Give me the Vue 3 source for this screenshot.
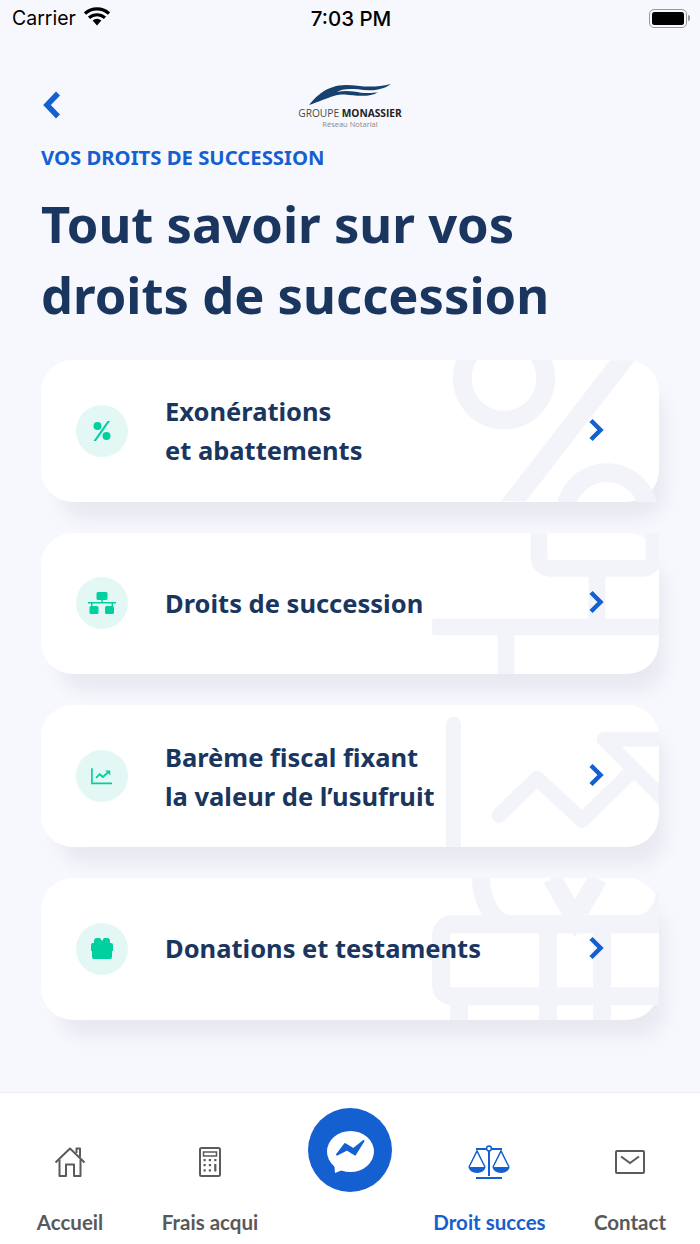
<script setup>
const cards = [
  { id: 'pct', lines: ['Exonérations', 'et abattements'] },
  { id: 'org', lines: ['Droits de succession'] },
  { id: 'chart', lines: ['Barème fiscal fixant', 'la valeur de l’usufruit'] },
  { id: 'gift', lines: ['Donations et testaments'] },
]
</script>

<template>
  <div class="page">
    <div class="status">
      <div class="status-left">
        <span>Carrier</span>
        <svg class="wifi" width="26" height="19" viewBox="0 0 26 19">
          <path d="M13 18.5 8.6 13.4a6.6 6.6 0 0 1 8.8 0Z" fill="#000" />
          <path d="M1 6.6a17.6 17.6 0 0 1 24 0M5 10.8a12 12 0 0 1 16 0" fill="none" stroke="#000" stroke-width="3.2" />
        </svg>
      </div>
      <span class="time">7:03 PM</span>
      <div class="battery">
        <div class="battery-body"><div class="battery-fill"></div></div>
        <div class="battery-tip"></div>
      </div>
    </div>

    <div class="topbar">
      <svg class="back" width="20" height="30" viewBox="0 0 20 30">
        <path d="M16 3.5 5 15l11 11.5" fill="none" stroke="#1560d0" stroke-width="5.5" />
      </svg>
      <div class="logo">
        <svg width="84" height="21" viewBox="0 0 84 24" preserveAspectRatio="none">
          <path d="M1 24C8 14 19 1 38 1c12 0 24 5 45-1-9 8-22 8-33 6-11-1-17 0-21 3 8-2 16-1 24 1 8 1 14 0 17-1-8 7-24 4-33 3-10-1-16 4-36 12Z" fill="#17406f" />
        </svg>
        <div class="logo-name">GROUPE <b>MONASSIER</b></div>
        <div class="logo-sub">Réseau Notarial</div>
      </div>
    </div>

    <main class="content">
      <div class="eyebrow">VOS DROITS DE SUCCESSION</div>
      <h1 class="title">Tout savoir sur vos<br />droits de succession</h1>

      <div class="cards">
        <div v-for="card in cards" :key="card.id" class="card">
          <svg class="mark" viewBox="0 0 618 141" fill="none" stroke="#f3f4fa" stroke-linecap="round" stroke-linejoin="round">
            <template v-if="card.id === 'pct'">
              <circle cx="463" cy="18" r="41.7" stroke-width="18.7" />
              <path d="M569 0h25L485 141h-25Z" fill="#f3f4fa" stroke="none" />
              <circle cx="566" cy="154" r="41.7" stroke-width="18.7" />
            </template>
            <template v-else-if="card.id === 'org'">
              <path d="M498-9V24a11 11 0 0 0 11 11H602a11 11 0 0 0 11-11V-9" stroke-width="16.7" />
              <path d="M556 35V90M465 95V150" stroke-width="16.7" stroke-linecap="butt" />
              <rect x="391" y="85.3" width="240" height="16.7" rx="3" fill="#f3f4fa" stroke="none" />
            </template>
            <template v-else-if="card.id === 'chart'">
              <path d="M412.5 19V150" stroke-width="15" />
              <path d="M458 110 496 73 541 115 590 67" stroke-width="15" />
              <path d="M640 34H563L630 101" stroke-width="15" />
            </template>
            <template v-else>
              <path d="M440-10C438 22 452 46 470 46H596C610 46 620 34 624 18" stroke-width="18" />
              <path d="M511 0 534 40 557 0" stroke-width="19" stroke-linecap="butt" stroke-linejoin="miter" />
              <path d="M640 46H411A11 11 0 0 0 400 57V107A11 11 0 0 0 411 118H640" stroke-width="18" stroke-linecap="butt" />
              <path d="M507 46V150M561 46V150M418 118V150" stroke-width="18" stroke-linecap="butt" />
            </template>
          </svg>

          <div class="card-icon">
            <svg v-if="card.id === 'pct'" width="20" height="20" viewBox="0 0 20 20" fill="#00cfa0">
              <circle cx="5.5" cy="5" r="4" />
              <circle cx="14.5" cy="15" r="4" />
              <path d="M15.5 0h2.5L4 20H1.5Z" />
            </svg>
            <svg v-else-if="card.id === 'org'" width="28" height="22" viewBox="0 0 28 22" fill="#00cfa0">
              <rect x="8.5" y="0" width="11" height="8" rx="1.5" />
              <rect x="0" y="10" width="28" height="1.5" />
              <rect x="3" y="11" width="1.5" height="3" />
              <rect x="23.5" y="11" width="1.5" height="3" />
              <rect x="13.3" y="7" width="1.5" height="4" />
              <rect x="1.5" y="14" width="9" height="8" rx="1.5" />
              <rect x="17" y="14" width="9" height="8" rx="1.5" />
            </svg>
            <svg v-else-if="card.id === 'chart'" width="22" height="17" viewBox="0 0 24 18" fill="none" stroke="#00cfa0" stroke-width="1.8">
              <path d="M1 0V16.5H23" />
              <path d="M5.5 10.5 9.5 6.5 13 9.5 19 4" stroke-width="2" />
              <path d="M15.5 2.5H21V8Z" fill="#00cfa0" stroke="none" />
            </svg>
            <svg v-else width="22" height="21" viewBox="0 0 22 21" fill="#00cfa0">
              <path d="M3 21a2 2 0 0 1-2-2v-6H0V7a2 2 0 0 1 2-2h1V3a3 3 0 0 1 3-3h3l2 3 2-3h3a3 3 0 0 1 3 3v2h1a2 2 0 0 1 2 2v6h-1v6a2 2 0 0 1-2 2Z" />
            </svg>
          </div>

          <div class="card-text" :class="{ two: card.lines.length > 1 }">
            <div v-for="line in card.lines" :key="line">{{ line }}</div>
          </div>

          <svg class="card-arrow" width="16" height="24" viewBox="0 0 16 24">
            <path d="M3 2.5 12.5 12 3 21.5" fill="none" stroke="#1560d0" stroke-width="4.5" />
          </svg>
        </div>
      </div>
    </main>

    <nav class="tabs">
      <div class="tab">
        <svg class="tab-icon" width="32" height="32" viewBox="0 0 32 32" fill="none" stroke="#5b5b5d" stroke-width="2" stroke-linejoin="round">
          <path d="M1.5 16.5 16 2.5 30.5 16.5" />
          <path d="M5.5 13.5V30H12V18.5H20V30H26.5V13.5" />
          <path d="M22.5 7V2.5H26V11" />
        </svg>
        <span>Accueil</span>
      </div>
      <div class="tab">
        <svg class="tab-icon" width="22" height="30" viewBox="0 0 22 30">
          <rect x="1" y="1" width="20" height="28" rx="1.5" fill="none" stroke="#5b5b5d" stroke-width="2" />
          <rect x="4.5" y="5" width="13" height="4" fill="none" stroke="#5b5b5d" stroke-width="1.5" />
          <g fill="#5b5b5d">
            <rect x="4.5" y="12" width="2.2" height="2.2" />
            <rect x="9.8" y="12" width="2.2" height="2.2" />
            <rect x="15.2" y="12" width="2.2" height="2.2" />
            <rect x="4.5" y="17" width="2.2" height="2.2" />
            <rect x="9.8" y="17" width="2.2" height="2.2" />
            <rect x="15.2" y="17" width="2.2" height="7.5" />
            <rect x="4.5" y="22.3" width="2.2" height="2.2" />
            <rect x="9.8" y="22.3" width="2.2" height="2.2" />
          </g>
        </svg>
        <span>Frais acqui</span>
      </div>
      <div class="tab">
        <div class="fab">
          <svg class="fab-icon" width="47" height="44" viewBox="0 0 47 44">
            <ellipse cx="23.5" cy="20.5" rx="23.5" ry="20.5" fill="#fff" />
            <path d="M7 30 8 42 18 38Z" fill="#fff" />
            <path d="M10 23.5 18 13l8.3 5.2L36.5 10 28 23.5l-8.3-5Z" fill="#1560d0" stroke="#1560d0" stroke-width="2" stroke-linejoin="round" />
          </svg>
        </div>
      </div>
      <div class="tab active">
        <svg class="tab-icon scale" width="42" height="34" viewBox="0 0 42 34" fill="none" stroke="#1560d0" stroke-width="1.5">
          <path d="M21 6V31M8 33H34" stroke-width="2" />
          <path d="M8 4H34" stroke-width="2" />
          <circle cx="21" cy="3.5" r="2.4" fill="#fff" />
          <path d="M1 22 9 6l8 16M25 22l8-16 8 16" />
          <path d="M0.5 22H17.5A8.5 6 0 0 1 0.5 22ZM24.5 22H41.5A8.5 6 0 0 1 24.5 22Z" fill="#1560d0" stroke="none" />
        </svg>
        <span>Droit succes</span>
      </div>
      <div class="tab">
        <svg class="tab-icon" width="30" height="24" viewBox="0 0 30 24" fill="none" stroke="#5b5b5d" stroke-width="2">
          <rect x="1" y="1" width="28" height="22" rx="1" />
          <path d="M6 6.5 15 13l9-6.5" />
        </svg>
        <span>Contact</span>
      </div>
    </nav>
  </div>
</template>

<style scoped>
.page {
  width: 700px;
  height: 1244px;
  display: flex;
  flex-direction: column;
  overflow: hidden;
  background: #f7f8fd;
  font-family: "Noto Sans", sans-serif;
}

.status {
  height: 36px;
  padding: 0 10px 0 12px;
  display: grid;
  grid-template-columns: 1fr auto 1fr;
  align-items: center;
  font-family: Inter, sans-serif;
  font-size: 19.5px;
  color: #000;
}

.status-left {
  display: flex;
  align-items: center;
  gap: 8px;
}

.wifi {
  margin-top: -3px;
}

.time {
  font-size: 20.5px;
  font-weight: 500;
}

.battery {
  display: flex;
  align-items: center;
  justify-content: flex-end;
  gap: 1px;
}

.battery-body {
  width: 38px;
  height: 19px;
  padding: 2px;
  border: 1.5px solid #999;
  border-radius: 5px;
  box-sizing: border-box;
}

.battery-fill {
  height: 100%;
  background: #000;
  border-radius: 2.5px;
}

.battery-tip {
  width: 2px;
  height: 6px;
  background: #999;
  border-radius: 0 2px 2px 0;
}

.topbar {
  height: 103px;
  padding: 0 42px;
  display: grid;
  grid-template-columns: 1fr auto 1fr;
  align-items: start;
}

.back {
  margin-top: 54px;
}

.logo {
  margin-top: 48px;
  display: flex;
  flex-direction: column;
  align-items: center;
  font-family: "Open Sans", sans-serif;
  color: #4a4a4c;
}

.logo-name {
  font-size: 10.2px;
  line-height: 12px;
  margin-top: 2px;
  white-space: nowrap;
}

.logo-name b {
  color: #222;
}

.logo-sub {
  font-size: 7.5px;
  line-height: 10px;
  color: #888;
}

.content {
  padding: 0 41px;
  flex: 1;
}

.eyebrow {
  font-size: 20.3px;
  line-height: 36px;
  font-weight: 700;
  color: #1560d0;
}

.title {
  margin: 13px 0 0;
  font-size: 50.7px;
  line-height: 71px;
  font-weight: 700;
  color: #1a365f;
}

.cards {
  margin-top: 30px;
  display: flex;
  flex-direction: column;
  gap: 31.1px;
}

.card {
  position: relative;
  height: 141.6px;
  padding: 0 55px 0 35px;
  display: flex;
  align-items: center;
  gap: 37px;
  box-sizing: border-box;
  background: #fff;
  border-radius: 32px;
  box-shadow: 12px 23px 20px -7px rgba(20, 20, 60, 0.065);
}

.mark {
  position: absolute;
  inset: 0;
  width: 100%;
  height: 100%;
}

.card-icon {
  position: relative;
  flex: none;
  width: 52px;
  height: 52px;
  border-radius: 50%;
  background: #e3f8f4;
  display: flex;
  align-items: center;
  justify-content: center;
}

.card-text {
  position: relative;
  flex: 1;
  font-size: 25.5px;
  line-height: 39px;
  font-weight: 700;
  color: #1a365f;
}

.card-text.two {
  padding-top: 1px;
}

.card-arrow {
  position: relative;
  flex: none;
  margin-top: -2px;
}

.tabs {
  height: 152px;
  box-sizing: border-box;
  border-top: 1px solid #eceef4;
  background: #fff;
  display: grid;
  grid-template-columns: repeat(5, 140px);
  font-family: Lato, sans-serif;
  font-size: 20.5px;
  font-weight: 700;
  color: #58595b;
}

.tab {
  display: flex;
  flex-direction: column;
  align-items: center;
  position: relative;
}

.tab-icon {
  height: 34px;
  margin-top: 52px;
}

.scale {
  margin-left: -3px;
}

.tab span {
  position: absolute;
  top: 117px;
  white-space: nowrap;
}

.active {
  color: #1560d0;
}

.active span {
  margin-left: -1px;
}

.fab {
  width: 84px;
  height: 84px;
  margin-top: 15px;
  border-radius: 50%;
  background: #1560d0;
  display: flex;
  align-items: center;
  justify-content: center;
}

.fab-icon {
  margin-top: 5px;
}
</style>
